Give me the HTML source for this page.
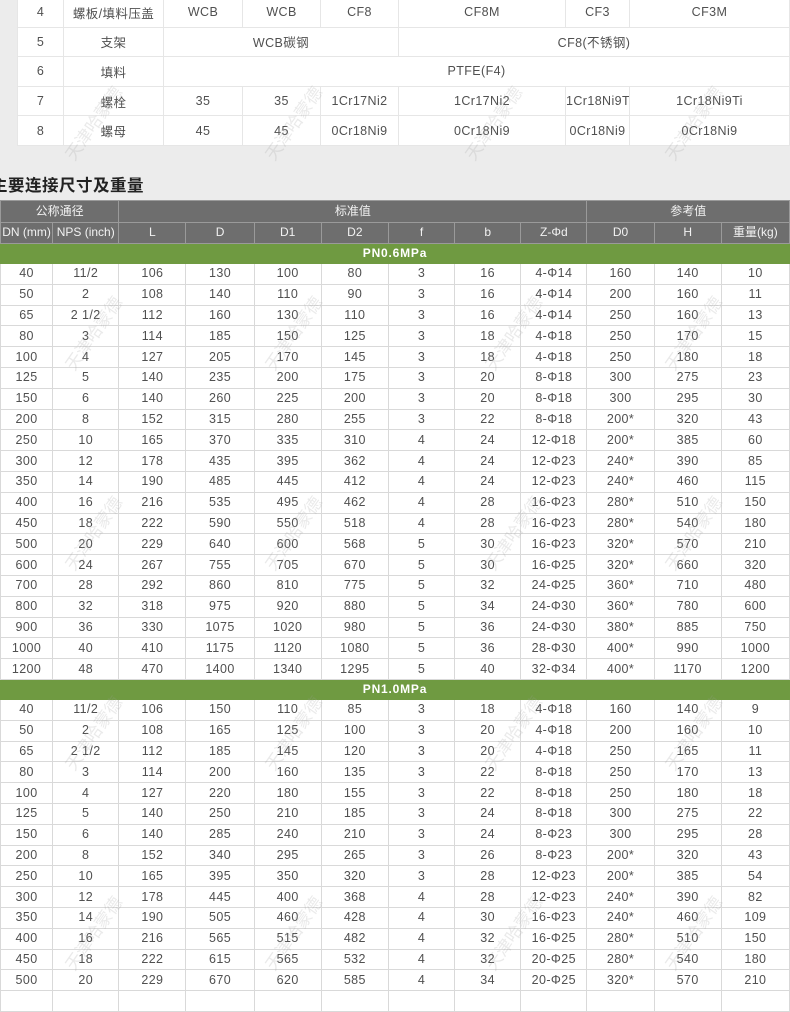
<!DOCTYPE html>
<html><head><meta charset="utf-8">
<style>
*{margin:0;padding:0;box-sizing:border-box}
body{width:790px;height:996px;overflow:hidden;background:#ececec;position:relative;font-family:"Liberation Sans","Noto Sans CJK SC",sans-serif;color:#505050}
table{border-collapse:collapse;table-layout:fixed;position:absolute}
td{text-align:center;vertical-align:middle;font-size:12.5px;white-space:nowrap;overflow:hidden;letter-spacing:.4px}
#top{left:17px;top:-3px;width:772px;background:#fff}
#top td{height:29.6px;border:1.5px solid #e6e6e6;font-size:12.5px}
#main{left:0;top:200px;width:790px;background:#fff}
#main td{border:1px solid #d9d9d9;height:20.8px;line-height:19px}
#main tr.h td{background:#6e6e6e;color:#f2f2f2;border:1.5px solid #9a9a9a;height:21.5px;font-size:12px;letter-spacing:0}
#main tr.g td{background:#6f9a41;color:#fff;font-weight:bold;height:20px;font-size:12px;border-color:#6f9a41;letter-spacing:.8px}
h2{position:absolute;left:-9px;top:172px;font-size:16.5px;font-weight:bold;color:#222;letter-spacing:.5px}
.wm{position:absolute;color:rgba(160,160,160,.22);font-size:17px;transform:rotate(-55deg);white-space:nowrap;pointer-events:none}
</style></head><body>
<table id="top">
<colgroup><col style="width:46px"><col style="width:100px"><col style="width:79px"><col style="width:78px"><col style="width:78px"><col style="width:167px"><col style="width:64px"><col style="width:160px"></colgroup>
<tr><td>4</td><td>螺板/填料压盖</td><td>WCB</td><td>WCB</td><td>CF8</td><td>CF8M</td><td>CF3</td><td>CF3M</td></tr>
<tr><td>5</td><td>支架</td><td colspan="3">WCB碳钢</td><td colspan="3">CF8(不锈钢)</td></tr>
<tr><td>6</td><td>填料</td><td colspan="6">PTFE(F4)</td></tr>
<tr><td>7</td><td>螺栓</td><td>35</td><td>35</td><td>1Cr17Ni2</td><td>1Cr17Ni2</td><td>1Cr18Ni9Ti</td><td>1Cr18Ni9Ti</td></tr>
<tr><td>8</td><td>螺母</td><td>45</td><td>45</td><td>0Cr18Ni9</td><td>0Cr18Ni9</td><td>0Cr18Ni9</td><td>0Cr18Ni9</td></tr>
</table>
<h2>主要连接尺寸及重量</h2>
<table id="main">
<colgroup><col style="width:52px"><col style="width:66px"><col style="width:67px"><col style="width:68px"><col style="width:67px"><col style="width:67px"><col style="width:66px"><col style="width:66px"><col style="width:66px"><col style="width:67px"><col style="width:67px"><col style="width:68px"></colgroup>
<tr class="h"><td colspan="2">公称通径</td><td colspan="7">标准值</td><td colspan="3">参考值</td></tr>
<tr class="h"><td>DN (mm)</td><td>NPS (inch)</td><td>L</td><td>D</td><td>D1</td><td>D2</td><td>f</td><td>b</td><td>Z-Φd</td><td>D0</td><td>H</td><td>重量(kg)</td></tr>
<tr class="g"><td colspan="12">PN0.6MPa</td></tr>
<tr><td>40</td><td>11/2</td><td>106</td><td>130</td><td>100</td><td>80</td><td>3</td><td>16</td><td>4-Φ14</td><td>160</td><td>140</td><td>10</td></tr>
<tr><td>50</td><td>2</td><td>108</td><td>140</td><td>110</td><td>90</td><td>3</td><td>16</td><td>4-Φ14</td><td>200</td><td>160</td><td>11</td></tr>
<tr><td>65</td><td>2 1/2</td><td>112</td><td>160</td><td>130</td><td>110</td><td>3</td><td>16</td><td>4-Φ14</td><td>250</td><td>160</td><td>13</td></tr>
<tr><td>80</td><td>3</td><td>114</td><td>185</td><td>150</td><td>125</td><td>3</td><td>18</td><td>4-Φ18</td><td>250</td><td>170</td><td>15</td></tr>
<tr><td>100</td><td>4</td><td>127</td><td>205</td><td>170</td><td>145</td><td>3</td><td>18</td><td>4-Φ18</td><td>250</td><td>180</td><td>18</td></tr>
<tr><td>125</td><td>5</td><td>140</td><td>235</td><td>200</td><td>175</td><td>3</td><td>20</td><td>8-Φ18</td><td>300</td><td>275</td><td>23</td></tr>
<tr><td>150</td><td>6</td><td>140</td><td>260</td><td>225</td><td>200</td><td>3</td><td>20</td><td>8-Φ18</td><td>300</td><td>295</td><td>30</td></tr>
<tr><td>200</td><td>8</td><td>152</td><td>315</td><td>280</td><td>255</td><td>3</td><td>22</td><td>8-Φ18</td><td>200*</td><td>320</td><td>43</td></tr>
<tr><td>250</td><td>10</td><td>165</td><td>370</td><td>335</td><td>310</td><td>4</td><td>24</td><td>12-Φ18</td><td>200*</td><td>385</td><td>60</td></tr>
<tr><td>300</td><td>12</td><td>178</td><td>435</td><td>395</td><td>362</td><td>4</td><td>24</td><td>12-Φ23</td><td>240*</td><td>390</td><td>85</td></tr>
<tr><td>350</td><td>14</td><td>190</td><td>485</td><td>445</td><td>412</td><td>4</td><td>24</td><td>12-Φ23</td><td>240*</td><td>460</td><td>115</td></tr>
<tr><td>400</td><td>16</td><td>216</td><td>535</td><td>495</td><td>462</td><td>4</td><td>28</td><td>16-Φ23</td><td>280*</td><td>510</td><td>150</td></tr>
<tr><td>450</td><td>18</td><td>222</td><td>590</td><td>550</td><td>518</td><td>4</td><td>28</td><td>16-Φ23</td><td>280*</td><td>540</td><td>180</td></tr>
<tr><td>500</td><td>20</td><td>229</td><td>640</td><td>600</td><td>568</td><td>5</td><td>30</td><td>16-Φ23</td><td>320*</td><td>570</td><td>210</td></tr>
<tr><td>600</td><td>24</td><td>267</td><td>755</td><td>705</td><td>670</td><td>5</td><td>30</td><td>16-Φ25</td><td>320*</td><td>660</td><td>320</td></tr>
<tr><td>700</td><td>28</td><td>292</td><td>860</td><td>810</td><td>775</td><td>5</td><td>32</td><td>24-Φ25</td><td>360*</td><td>710</td><td>480</td></tr>
<tr><td>800</td><td>32</td><td>318</td><td>975</td><td>920</td><td>880</td><td>5</td><td>34</td><td>24-Φ30</td><td>360*</td><td>780</td><td>600</td></tr>
<tr><td>900</td><td>36</td><td>330</td><td>1075</td><td>1020</td><td>980</td><td>5</td><td>36</td><td>24-Φ30</td><td>380*</td><td>885</td><td>750</td></tr>
<tr><td>1000</td><td>40</td><td>410</td><td>1175</td><td>1120</td><td>1080</td><td>5</td><td>36</td><td>28-Φ30</td><td>400*</td><td>990</td><td>1000</td></tr>
<tr><td>1200</td><td>48</td><td>470</td><td>1400</td><td>1340</td><td>1295</td><td>5</td><td>40</td><td>32-Φ34</td><td>400*</td><td>1170</td><td>1200</td></tr>
<tr class="g"><td colspan="12">PN1.0MPa</td></tr>
<tr><td>40</td><td>11/2</td><td>106</td><td>150</td><td>110</td><td>85</td><td>3</td><td>18</td><td>4-Φ18</td><td>160</td><td>140</td><td>9</td></tr>
<tr><td>50</td><td>2</td><td>108</td><td>165</td><td>125</td><td>100</td><td>3</td><td>20</td><td>4-Φ18</td><td>200</td><td>160</td><td>10</td></tr>
<tr><td>65</td><td>2 1/2</td><td>112</td><td>185</td><td>145</td><td>120</td><td>3</td><td>20</td><td>4-Φ18</td><td>250</td><td>165</td><td>11</td></tr>
<tr><td>80</td><td>3</td><td>114</td><td>200</td><td>160</td><td>135</td><td>3</td><td>22</td><td>8-Φ18</td><td>250</td><td>170</td><td>13</td></tr>
<tr><td>100</td><td>4</td><td>127</td><td>220</td><td>180</td><td>155</td><td>3</td><td>22</td><td>8-Φ18</td><td>250</td><td>180</td><td>18</td></tr>
<tr><td>125</td><td>5</td><td>140</td><td>250</td><td>210</td><td>185</td><td>3</td><td>24</td><td>8-Φ18</td><td>300</td><td>275</td><td>22</td></tr>
<tr><td>150</td><td>6</td><td>140</td><td>285</td><td>240</td><td>210</td><td>3</td><td>24</td><td>8-Φ23</td><td>300</td><td>295</td><td>28</td></tr>
<tr><td>200</td><td>8</td><td>152</td><td>340</td><td>295</td><td>265</td><td>3</td><td>26</td><td>8-Φ23</td><td>200*</td><td>320</td><td>43</td></tr>
<tr><td>250</td><td>10</td><td>165</td><td>395</td><td>350</td><td>320</td><td>3</td><td>28</td><td>12-Φ23</td><td>200*</td><td>385</td><td>54</td></tr>
<tr><td>300</td><td>12</td><td>178</td><td>445</td><td>400</td><td>368</td><td>4</td><td>28</td><td>12-Φ23</td><td>240*</td><td>390</td><td>82</td></tr>
<tr><td>350</td><td>14</td><td>190</td><td>505</td><td>460</td><td>428</td><td>4</td><td>30</td><td>16-Φ23</td><td>240*</td><td>460</td><td>109</td></tr>
<tr><td>400</td><td>16</td><td>216</td><td>565</td><td>515</td><td>482</td><td>4</td><td>32</td><td>16-Φ25</td><td>280*</td><td>510</td><td>150</td></tr>
<tr><td>450</td><td>18</td><td>222</td><td>615</td><td>565</td><td>532</td><td>4</td><td>32</td><td>20-Φ25</td><td>280*</td><td>540</td><td>180</td></tr>
<tr><td>500</td><td>20</td><td>229</td><td>670</td><td>620</td><td>585</td><td>4</td><td>34</td><td>20-Φ25</td><td>320*</td><td>570</td><td>210</td></tr>
<tr><td></td><td></td><td></td><td></td><td></td><td></td><td></td><td></td><td></td><td></td><td></td><td></td></tr>
</table>
<div class="wm" style="left:50px;top:110px">天津哈蒙德</div>
<div class="wm" style="left:250px;top:110px">天津哈蒙德</div>
<div class="wm" style="left:450px;top:110px">天津哈蒙德</div>
<div class="wm" style="left:650px;top:110px">天津哈蒙德</div>
<div class="wm" style="left:50px;top:320px">天津哈蒙德</div>
<div class="wm" style="left:250px;top:320px">天津哈蒙德</div>
<div class="wm" style="left:470px;top:320px">天津哈蒙德</div>
<div class="wm" style="left:650px;top:320px">天津哈蒙德</div>
<div class="wm" style="left:50px;top:520px">天津哈蒙德</div>
<div class="wm" style="left:250px;top:520px">天津哈蒙德</div>
<div class="wm" style="left:470px;top:520px">天津哈蒙德</div>
<div class="wm" style="left:650px;top:520px">天津哈蒙德</div>
<div class="wm" style="left:50px;top:720px">天津哈蒙德</div>
<div class="wm" style="left:250px;top:720px">天津哈蒙德</div>
<div class="wm" style="left:470px;top:720px">天津哈蒙德</div>
<div class="wm" style="left:650px;top:720px">天津哈蒙德</div>
<div class="wm" style="left:50px;top:920px">天津哈蒙德</div>
<div class="wm" style="left:250px;top:920px">天津哈蒙德</div>
<div class="wm" style="left:470px;top:920px">天津哈蒙德</div>
<div class="wm" style="left:650px;top:920px">天津哈蒙德</div>
</body></html>
